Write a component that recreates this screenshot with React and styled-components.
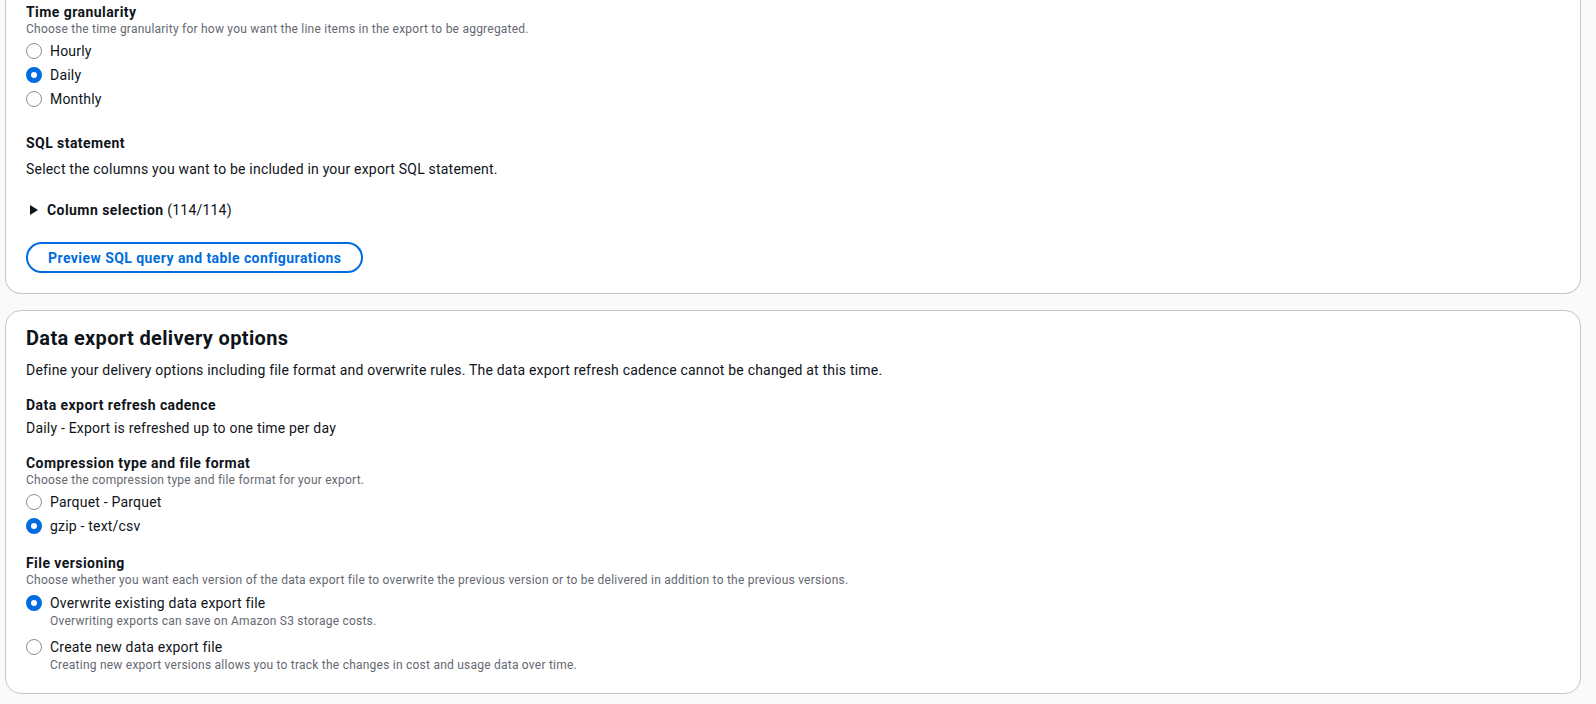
import React from 'react';
import styled, { createGlobalStyle } from 'styled-components';

const GlobalStyle = createGlobalStyle`
  html, body {
    margin: 0;
    padding: 0;
    background: #fafafa;
  }
  body {
    font-family: Roboto, "Noto Sans", "Liberation Sans", sans-serif;
    color: #0f141a;
    letter-spacing: 0.2px;
    -webkit-font-smoothing: antialiased;
  }
`;

const Page = styled.div`
  display: flex;
  flex-direction: column;
  gap: 16px;
  padding: 0 15px 10px 5px;
`;

const Card = styled.section`
  background: #ffffff;
  border: 1px solid #c6c6cd;
  border-radius: ${(p) => (p.$clipped ? '0 0 16px 16px' : '16px')};
  border-top-width: ${(p) => (p.$clipped ? '0' : '1px')};
  padding: ${(p) => (p.$clipped ? '3px 20px 20px' : '15px 20px 20px')};
`;

const Heading = styled.h2`
  margin: 0;
  font-size: 20px;
  line-height: 24px;
  font-weight: 700;
  letter-spacing: 0.35px;
`;

const Field = styled.div`
  margin-top: ${(p) => p.$top || 0}px;
`;

const Label = styled.div`
  font-size: 14px;
  line-height: 18px;
  font-weight: 700;
  letter-spacing: 0.44px;
`;

const Description = styled.div`
  font-size: 12px;
  line-height: 16px;
  color: #656871;
  letter-spacing: 0.23px;
`;

const BodyText = styled.div`
  font-size: 14px;
  line-height: 20px;
  margin-top: ${(p) => p.$top || 0}px;
`;

const RadioGroup = styled.div`
  display: flex;
  flex-direction: column;
  gap: ${(p) => p.$gap || 4}px;
  margin-top: ${(p) => p.$top || 4}px;
`;

const RadioOption = styled.label`
  display: grid;
  grid-template-columns: 16px 1fr;
  column-gap: 8px;
  cursor: pointer;
`;

const RadioMark = styled.span`
  box-sizing: border-box;
  width: 16px;
  height: 16px;
  margin-top: 2px;
  border-radius: 50%;
  background: #ffffff;
  border: ${(p) => (p.$checked ? '5px solid #006ce0' : '1.5px solid #8c8c94')};
`;

const RadioText = styled.span`
  font-size: 14px;
  line-height: 20px;
`;

const RadioDesc = styled.span`
  grid-column: 2;
  font-size: 12px;
  line-height: 16px;
  color: #656871;
  letter-spacing: 0.23px;
`;

const Expander = styled.div`
  display: flex;
  align-items: center;
  gap: 5px;
  margin-top: 21px;
  font-size: 14px;
  line-height: 20px;
  cursor: pointer;

  strong {
    font-weight: 700;
    letter-spacing: 0.44px;
  }
`;

const Button = styled.button`
  display: inline-block;
  margin-top: 22px;
  padding: 3.5px 20px;
  border: 2px solid #006ce0;
  border-radius: 20px;
  background: #ffffff;
  color: #006ce0;
  font-family: inherit;
  font-size: 14px;
  line-height: 20px;
  font-weight: 700;
  letter-spacing: 0.44px;
  cursor: pointer;
`;

function Radio({ label, description, checked }) {
  return (
    <RadioOption>
      <RadioMark $checked={checked} />
      <RadioText>{label}</RadioText>
      {description && <RadioDesc>{description}</RadioDesc>}
    </RadioOption>
  );
}

const granularity = [
  { label: 'Hourly' },
  { label: 'Daily', checked: true },
  { label: 'Monthly' },
];

const formats = [
  { label: 'Parquet - Parquet' },
  { label: 'gzip - text/csv', checked: true },
];

const versions = [
  {
    label: 'Overwrite existing data export file',
    description: 'Overwriting exports can save on Amazon S3 storage costs.',
    checked: true,
  },
  {
    label: 'Create new data export file',
    description: 'Creating new export versions allows you to track the changes in cost and usage data over time.',
  },
];

export default function App() {
  return (
    <>
      <GlobalStyle />
      <Page>
        <Card $clipped>
          <Field>
            <Label>Time granularity</Label>
            <Description>Choose the time granularity for how you want the line items in the export to be aggregated.</Description>
            <RadioGroup>
              {granularity.map((r) => (
                <Radio key={r.label} {...r} />
              ))}
            </RadioGroup>
          </Field>

          <Field $top={25}>
            <Label>SQL statement</Label>
            <BodyText $top={7}>Select the columns you want to be included in your export SQL statement.</BodyText>
          </Field>

          <Expander>
            <svg width="16" height="16" viewBox="0 0 16 16">
              <polygon points="4,3 12,8 4,13" fill="#0f141a" />
            </svg>
            <span>
              <strong>Column selection</strong> (114/114)
            </span>
          </Expander>

          <Button>Preview SQL query and table configurations</Button>
        </Card>

        <Card>
          <Heading>Data export delivery options</Heading>
          <BodyText $top={10}>
            Define your delivery options including file format and overwrite rules. The data export refresh cadence cannot be changed at this time.
          </BodyText>

          <Field $top={16}>
            <Label>Data export refresh cadence</Label>
            <BodyText $top={4}>Daily - Export is refreshed up to one time per day</BodyText>
          </Field>

          <Field $top={16}>
            <Label>Compression type and file format</Label>
            <Description>Choose the compression type and file format for your export.</Description>
            <RadioGroup>
              {formats.map((r) => (
                <Radio key={r.label} {...r} />
              ))}
            </RadioGroup>
          </Field>

          <Field $top={18}>
            <Label>File versioning</Label>
            <Description>
              Choose whether you want each version of the data export file to overwrite the previous version or to be delivered in addition to the previous versions.
            </Description>
            <RadioGroup $top={5} $gap={8}>
              {versions.map((r) => (
                <Radio key={r.label} {...r} />
              ))}
            </RadioGroup>
          </Field>
        </Card>
      </Page>
    </>
  );
}
